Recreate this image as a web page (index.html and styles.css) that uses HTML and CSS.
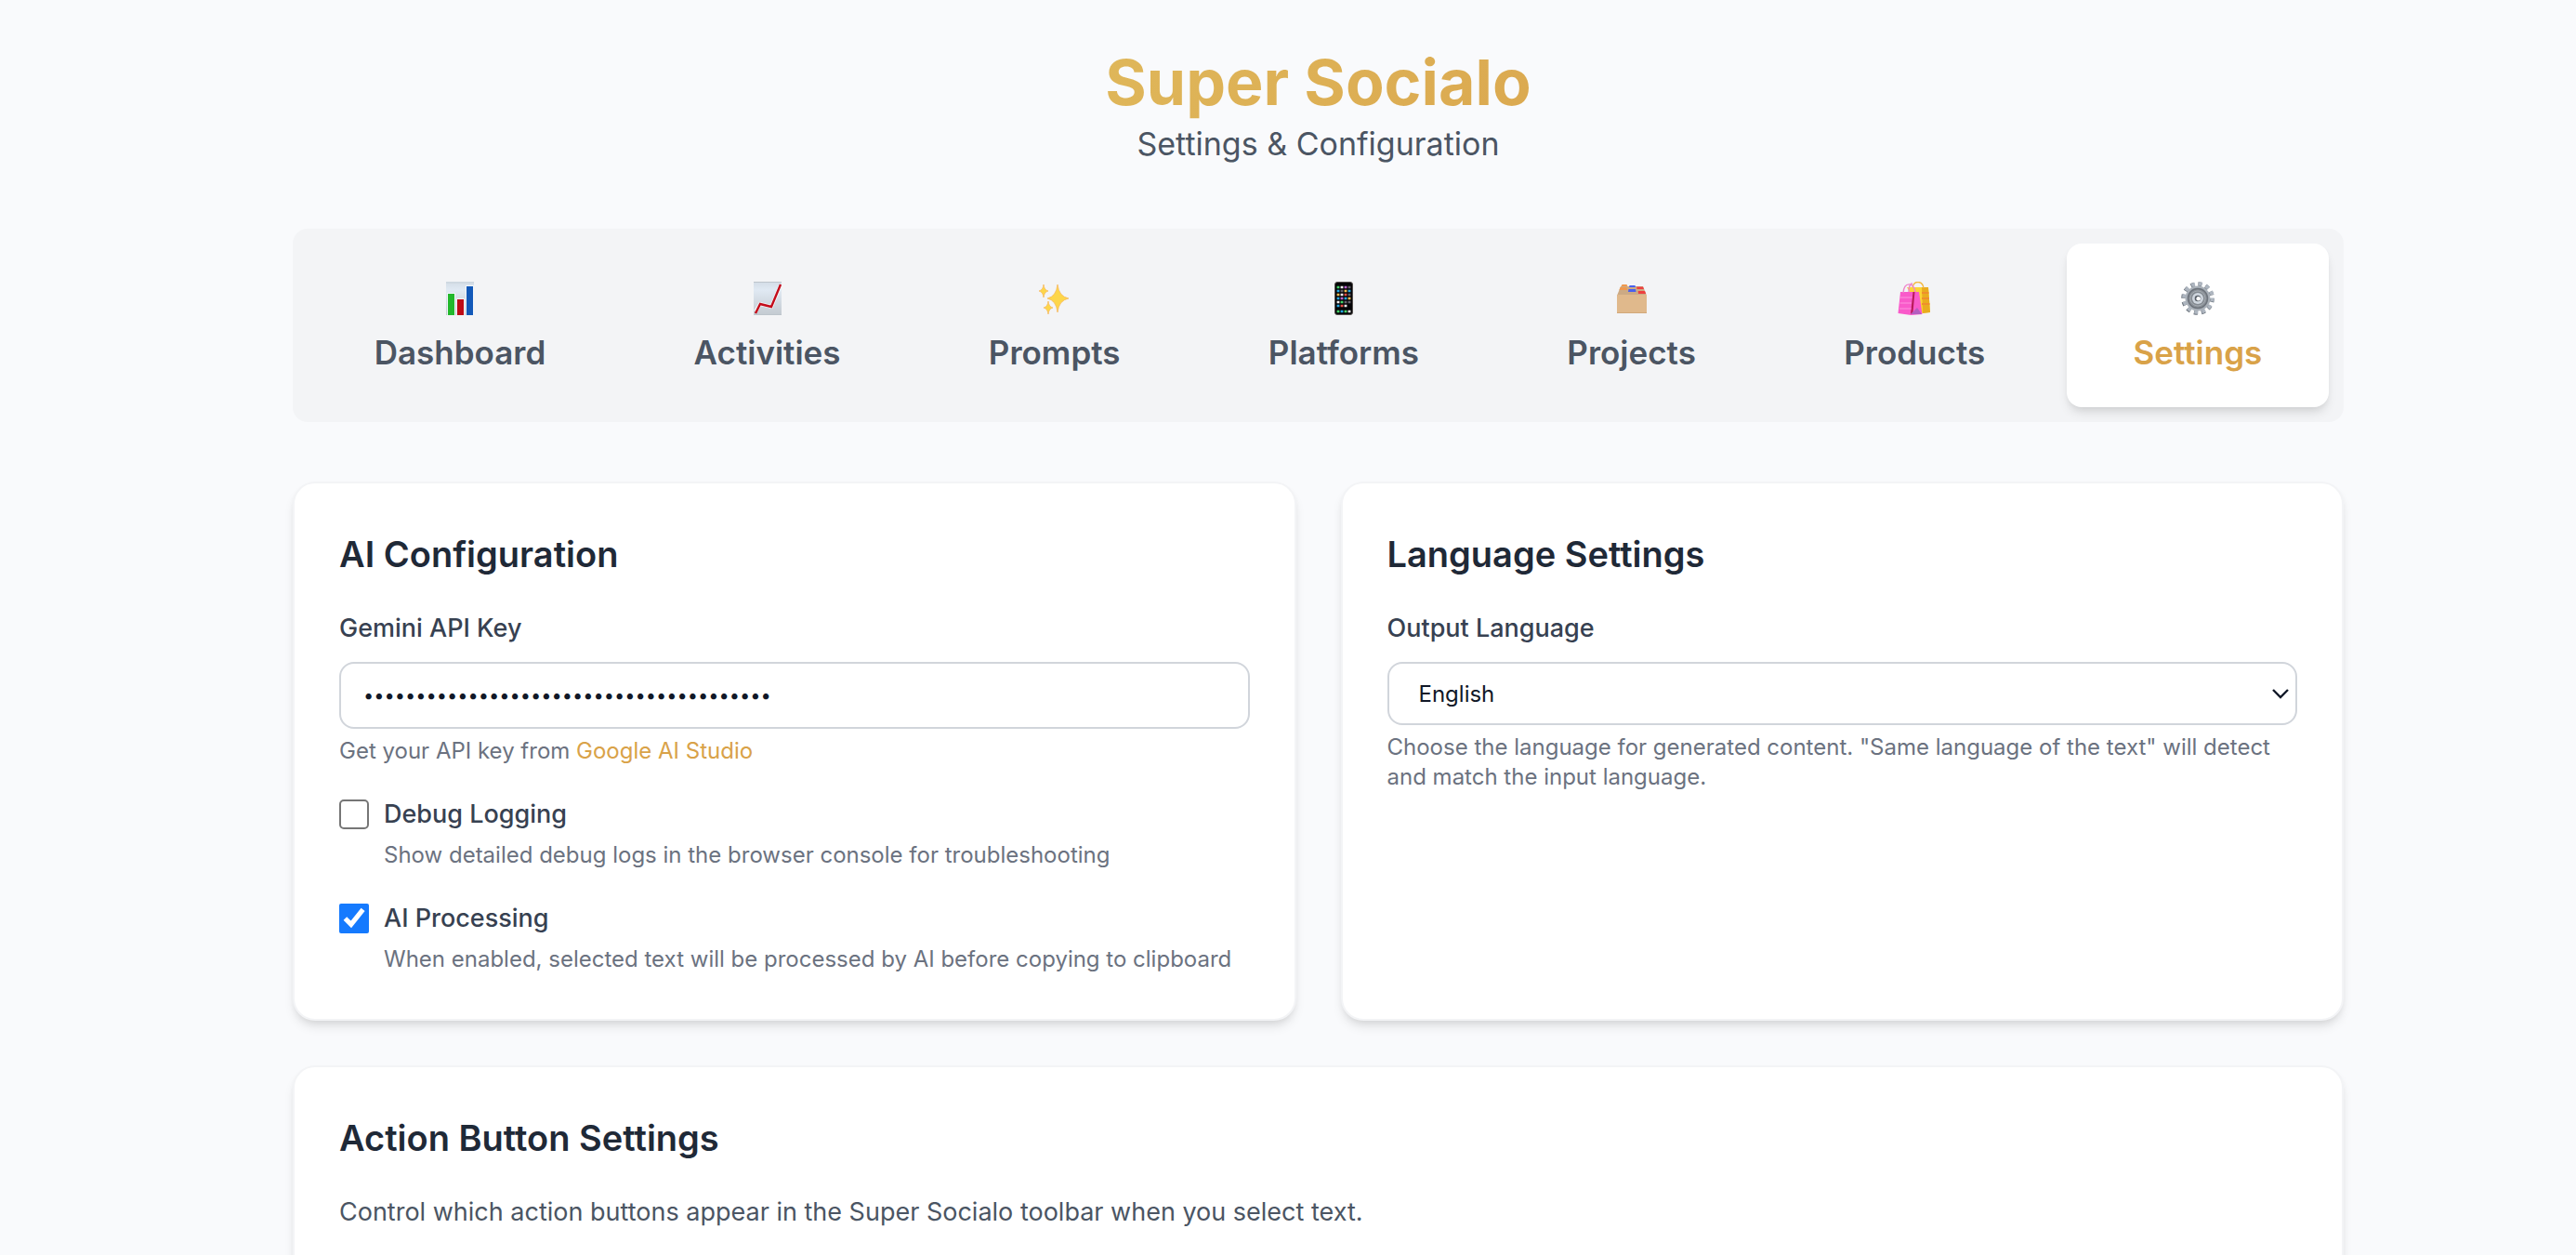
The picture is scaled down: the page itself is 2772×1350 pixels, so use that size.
FILE: index.html
```html
<!DOCTYPE html>
<html lang="en">
<head>
  <meta charset="utf-8">
  <meta name="viewport" content="width=device-width, initial-scale=1">
  <title>Super Socialo - Settings</title>
  <link rel="stylesheet" href="styles.css">
</head>
<body>
  <div class="page">
    <header class="header">
      <h1 class="brand">Super Socialo</h1>
      <p class="subtitle">Settings &amp; Configuration</p>
    </header>

    <nav class="tabs" aria-label="Sections">
      <button type="button" class="tab">
        <svg class="tab-icon" viewBox="0 0 36 36" aria-hidden="true">
          <defs>
            <linearGradient id="paper" x1="0" y1="0" x2="0" y2="1"><stop offset="0" stop-color="#d3dde6"/><stop offset=".25" stop-color="#e0e9f3"/><stop offset="1" stop-color="#c3cad0"/></linearGradient>
          </defs>
          <rect x="3" y="0" width="30" height="36" fill="url(#paper)"/>
          <path d="M3 1h30" stroke="#c9d2da"/>
          <path d="M4 12h9v24H4zM14 18h9v18h-9zM24 4h9v32h-9z" fill="#f2f6f9"/>
          <path d="M5 13h7v23H5z" fill="#22b82c"/>
          <path d="M15 19h7v17h-7z" fill="#bd0b16"/>
          <path d="M25 5h7v31h-7z" fill="#1259b9"/>
        </svg>
        <span>Dashboard</span>
      </button>
      <button type="button" class="tab">
        <svg class="tab-icon" viewBox="0 0 36 36" aria-hidden="true">
          <rect x="3" y="0" width="30" height="36" fill="url(#paper)"/>
          <path d="M3 .5h30M3 35.500h30" stroke="#bdc5cc"/>
          <path d="M5 32l5-8 12 3L32 4" fill="none" stroke="#f5f8fa" stroke-width="4"/>
          <path d="M5 34l5-10 12 3L32 3" fill="none" stroke="#c40d1b" stroke-width="2.400"/>
        </svg>
        <span>Activities</span>
      </button>
      <button type="button" class="tab">
        <svg class="tab-icon" viewBox="0 0 36 36" aria-hidden="true">
          <g fill="#fdd64a" stroke="#f6b45a" stroke-width=".7">
            <path d="M21 3q1.500 13 12 15q-10.500 2-12 15q-1.500-13-11-15q9.500-2 11-15z"/>
            <path d="M6 3q.7 6 5 7q-4.300 1-5 7q-.7-6-5-7q4.300-1 5-7z"/>
            <path d="M11 21q.7 6 5 7q-4.300 1-5 7q-.7-6-5-7q4.300-1 5-7z"/>
          </g>
        </svg>
        <span>Prompts</span>
      </button>
      <button type="button" class="tab">
        <svg class="tab-icon" viewBox="0 0 36 36" aria-hidden="true">
          <rect x="8.500" y=".5" width="19" height="35" rx="2.500" fill="#050507" stroke="#55504f"/>
          <g stroke-width="2.400" fill="none">
            <path d="M10.600 6h2.800M14.600 22h2.800M10.600 32h2.800M18.600 32h2.800" stroke="#45d469"/>
            <path d="M14.600 6h2.800M14.600 14h2.800M10.600 22h2.800M18.600 26h2.800M22.600 32h2.800" stroke="#f1eff0"/>
            <path d="M10.600 10h2.800M22.600 10h2.800M10.600 18h2.800M18.600 18h2.800M10.600 26h2.800M14.600 32h2.800" stroke="#26a9e4"/>
            <path d="M18.600 6h2.800M14.600 18h2.800" stroke="#bb62ce"/>
            <path d="M18.600 14h2.800M14.600 26h2.800" stroke="#e95148"/>
            <path d="M10.600 14h2.800M18.600 10h2.800M22.600 18h2.800" stroke="#f3bd55"/>
            <path d="M14.600 10h2.800M22.600 14h2.800M22.600 6h2.800M18.600 22h2.800M22.600 22h2.800" stroke="#66626b"/>
          </g>
        </svg>
        <span>Platforms</span>
      </button>
      <button type="button" class="tab">
        <svg class="tab-icon" viewBox="0 0 36 36" aria-hidden="true">
          <path d="M6 5h24l4 10H2z" fill="#ccaa84"/>
          <path d="M6.500 5l1-2h5l1 2zM4.500 9l1-3h7l.5 3z" fill="#f0984d"/>
          <path d="M15 6l.5-2h6l.5 2zM14 11l.5-3h7.500l.5 3z" fill="#4a60ee"/>
          <path d="M23.500 8l-.3-2.500h6.800l1 2.500zM25 13l-.3-3h7.300l1.200 3z" fill="#ee4040"/>
          <path d="M2 14h32v19.500H2z" fill="#e0b98c"/>
          <path d="M2 33.500h32" stroke="#d2a87a"/>
        </svg>
        <span>Projects</span>
      </button>
      <button type="button" class="tab">
        <svg class="tab-icon" viewBox="0 0 36 36" aria-hidden="true">
          <path d="M10 6h23l2 27-10 1z" fill="#fbd435"/>
          <path d="M26 6h7l2 27-8 1z" fill="#e9ac1f"/>
          <path d="M26 12h7.500M26 18h8M26 24h8.500" stroke="#ef8f2c" stroke-width="2"/>
          <path d="M16 6c2-8 11-7 12 1" fill="none" stroke="#f3b941" stroke-width="1.400"/>
          <path d="M3 11h20l3.500 24-12 1L.500 34z" fill="#f95aca"/>
          <path d="M16.500 11h2l-2 22-2.500 2z" fill="#b81b58"/>
          <path d="M14 35l7-7 5 7z" fill="#b35fc0"/>
          <path d="M3 17h12.500M2.500 23H15M2 29h12.500" stroke="#fc80d8" stroke-width="1.500"/>
          <path d="M6 12C7 0 17 0 19 11M12 11c0-8 3-9 4-9" fill="none" stroke="#ee86cc" stroke-width="1.400"/>
        </svg>
        <span>Products</span>
      </button>
      <button type="button" class="tab tab-active" aria-current="page">
        <svg class="tab-icon" viewBox="0 0 36 36" aria-hidden="true">
          <circle cx="18" cy="18" r="15.500" fill="none" stroke="#6f7780" stroke-width="4.600" stroke-dasharray="4 4.115"/>
          <circle cx="18.500" cy="17.500" r="15.300" fill="none" stroke="#aeb6c0" stroke-width="4" stroke-dasharray="3.900 4.111"/>
          <circle cx="18" cy="18" r="13.500" fill="#a9b0b8"/>
          <circle cx="18" cy="18" r="10.500" fill="#8b9198" stroke="#6d737b" stroke-width="1.500"/>
          <circle cx="18" cy="18" r="8" fill="#858b92" stroke="#a5abb1"/>
          <circle cx="18" cy="18" r="6" fill="#cfd6de"/>
          <circle cx="18" cy="18" r="3.300" fill="#5b6169"/>
          <circle cx="18.700" cy="18.300" r="2.300" fill="#fff"/>
        </svg>
        <span>Settings</span>
      </button>
    </nav>

    <main class="cards">
      <section class="card">
        <h2 class="card-title">AI Configuration</h2>
        <div class="field">
          <label class="label" for="api-key">Gemini API Key</label>
          <input class="control key-input" id="api-key" type="password" value="000000000000000000000000000000000000000">
          <p class="help">Get your API key from <a class="link" href="#">Google AI Studio</a></p>
        </div>
        <div class="field check-field">
          <input class="checkbox" id="debug" type="checkbox">
          <label class="label" for="debug">Debug Logging</label>
          <p class="help check-help">Show detailed debug logs in the browser console for troubleshooting</p>
        </div>
        <div class="field check-field">
          <input class="checkbox" id="processing" type="checkbox" checked>
          <label class="label" for="processing">AI Processing</label>
          <p class="help check-help">When enabled, selected text will be processed by AI before copying to clipboard</p>
        </div>
      </section>

      <section class="card">
        <h2 class="card-title">Language Settings</h2>
        <div class="field">
          <label class="label" for="language">Output Language</label>
          <div class="select-wrap">
            <select class="control select" id="language">
              <option>English</option>
              <option>Same language of the text</option>
            </select>
            <svg class="chevron" viewBox="0 0 20 12" aria-hidden="true"><path d="M2 2l8 8 8-8" fill="none" stroke="#111827" stroke-width="2.400"/></svg>
          </div>
          <p class="help">Choose the language for generated content. "Same language of the text" will detect and match the input language.</p>
        </div>
      </section>

      <section class="card card-wide">
        <h2 class="card-title">Action Button Settings</h2>
        <p class="description">Control which action buttons appear in the Super Socialo toolbar when you select text.</p>
      </section>
    </main>
  </div>
</body>
</html>
```
FILE: styles.css
```css
*,
*::before,
*::after {
  box-sizing: border-box;
}

body {
  margin: 0;
  background: #f9fafc;
  color: #111827;
  font-family: Inter, "Liberation Sans", sans-serif;
}

h1,
h2,
p {
  margin: 0;
}

.page {
  padding: 48px 250px 48px 315px;
}

.header {
  margin-bottom: 64px;
  text-align: center;
}

.brand {
  width: fit-content;
  margin: 0 auto;
  background: linear-gradient(135deg, #dfb75a, #dba950);
  background-clip: text;
  color: transparent;
  font-size: 68px;
  font-weight: 700;
  line-height: 80px;
}

.subtitle {
  color: #4b5563;
  font-size: 34px;
  line-height: 54px;
}

.tabs {
  display: flex;
  gap: 16px;
  margin-bottom: 64px;
  padding: 16px;
  border-radius: 16px;
  background: #f3f4f6;
}

.tab {
  display: flex;
  flex: 1 1 auto;
  flex-direction: column;
  align-items: center;
  padding: 41px 48px 31px;
  border: 0;
  border-radius: 16px;
  background: transparent;
  color: #4b5563;
  font-family: inherit;
  font-size: 35px;
  font-weight: 600;
  line-height: 56px;
  cursor: pointer;
}

.tab-active {
  background: #fff;
  box-shadow: 0 8px 12px -2px rgb(0 0 0 / 10%), 0 4px 8px -4px rgb(0 0 0 / 10%);
  color: #d9a248;
}

.tab-icon {
  width: 36px;
  height: 36px;
  margin-bottom: 12px;
}

.cards {
  display: grid;
  grid-template-columns: 1fr 1fr;
  gap: 48px;
}

.card {
  padding: 48px;
  border: 2px solid #f3f4f6;
  border-radius: 24px;
  background: #fff;
  box-shadow: 0 8px 12px -2px rgb(0 0 0 / 10%), 0 4px 8px -4px rgb(0 0 0 / 10%);
}

.card-wide {
  grid-column: 1 / -1;
}

.card-title {
  margin-bottom: 32px;
  color: #1f2937;
  font-size: 38px;
  font-weight: 600;
  line-height: 56px;
}

.field + .field {
  margin-top: 32px;
}

.label {
  display: block;
  color: #374151;
  font-size: 27px;
  font-weight: 500;
  line-height: 40px;
}

.control {
  display: block;
  width: 100%;
  margin-top: 16px;
  border: 2px solid #d1d5db;
  border-radius: 16px;
  background: #fff;
  color: #111827;
  font-family: inherit;
}

.key-input {
  height: 72px;
  padding: 0 24px;
  font-size: 20px;
}

.select-wrap {
  display: grid;
  align-items: center;
  margin-top: 16px;
}

.select {
  grid-area: 1 / 1;
  height: 68px;
  margin-top: 0;
  padding: 0 32px;
  appearance: none;
  font-size: 24px;
}

.chevron {
  grid-area: 1 / 1;
  justify-self: end;
  width: 20px;
  height: 12px;
  margin-right: 8px;
  pointer-events: none;
}

.help {
  margin-top: 8px;
  color: #6b7280;
  font-size: 24px;
  line-height: 32px;
}

.link {
  color: #d9a248;
  text-decoration: none;
}

.check-field {
  display: grid;
  grid-template-columns: 32px 1fr;
  column-gap: 16px;
  align-items: center;
}

.checkbox {
  width: 32px;
  height: 32px;
  margin: 0;
  accent-color: #157afe;
}

.checkbox:not(:checked) {
  border: 2px solid #767676;
  border-radius: 5px;
  background: #fff;
  appearance: none;
}

.check-help {
  grid-column: 2;
}

.description {
  color: #4b5563;
  font-size: 27px;
  line-height: 40px;
}
```
